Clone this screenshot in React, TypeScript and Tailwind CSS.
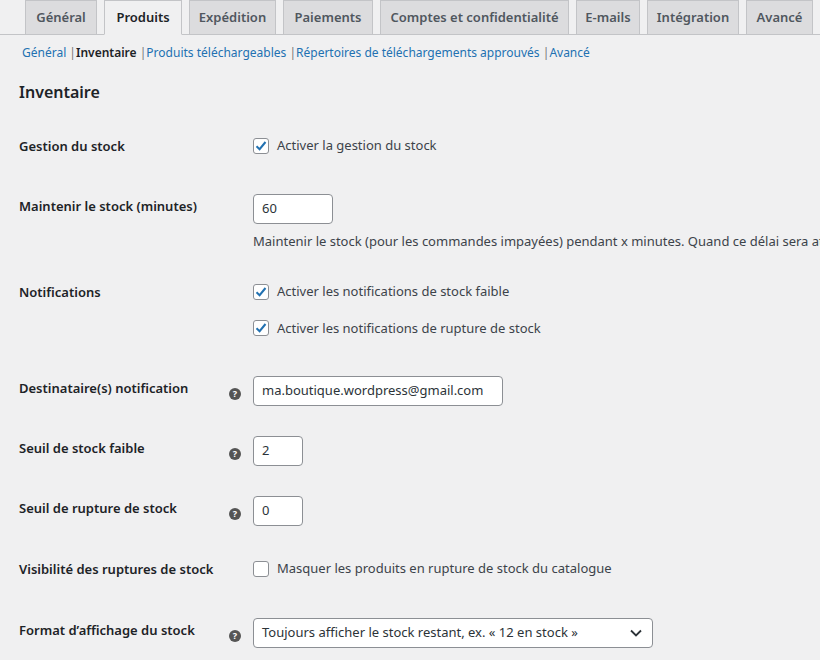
import React from "react";

const Help = () => (
  <span className="inline-flex w-[12px] h-[12px] rounded-full bg-[#555] text-white text-[9px] font-bold items-center justify-center leading-none">?</span>
);

const Check = ({ on }: { on: boolean }) => (
  <span className="inline-flex w-[16px] h-[16px] rounded-[3px] border border-[#8c8f94] bg-white items-center justify-center">
    {on && (
      <svg width="14" height="14" viewBox="0 0 14 14"><path d="M2.5 7.2 L5.6 10.2 L11.5 3" stroke="#2271b1" strokeWidth="2" fill="none" /></svg>
    )}
  </span>
);

const Row = ({ label, help, children, h }: { label: string; help?: boolean; children: React.ReactNode; h: string }) => (
  <div className={`flex items-start ${h}`}>
    <div className="w-[210px] shrink-0 font-semibold text-[#1d2327] pt-[3px]">{label}</div>
    <div className="w-[24px] shrink-0 pt-[7px]">{help && <Help />}</div>
    <div className="flex-1 whitespace-nowrap">{children}</div>
  </div>
);

const Input = ({ v, w }: { v: string; w: string }) => (
  <div className={`${w} h-[30px] border border-[#8c8f94] rounded-[4px] bg-white px-[8px] flex items-center text-[#2c3338]`}>{v}</div>
);

export default function App() {
  const tabs: [string, string][] = [
    ["Général", "w-[72px]"], ["Produits", "w-[78px]"], ["Expédition", "w-[87px]"], ["Paiements", "w-[90px]"],
    ["Comptes et confidentialité", "w-[189px]"], ["E-mails", "w-[64px]"], ["Intégration", "w-[92px]"], ["Avancé", "w-[67px]"],
  ];
  return (
    <div className="w-[820px] h-[660px] overflow-hidden bg-[#f0f0f1] text-[13px] text-[#3c434a]" style={{ fontFamily: '"Noto Sans", "Open Sans", sans-serif' }}>
      <div className="flex gap-[7px] pl-[25px] border-b border-[#c3c4c7] h-[35px] items-end">
        {tabs.map(([t, w]) => (
          <div key={t} className={`${w} h-[35px] flex items-center justify-center text-[13px] font-semibold border border-[#c3c4c7] -mb-px shrink-0 whitespace-nowrap ${t === "Produits" ? "bg-[#f0f0f1] text-[#1d2327] border-b-[#f0f0f1]" : "bg-[#dcdcde] text-[#50575e]"}`}>{t}</div>
        ))}
      </div>
      <div className="pl-[22px] pt-[9px] text-[12px] text-[#2271b1] whitespace-nowrap">
        Général <span className="text-[#777]">|</span><span className="font-semibold text-[#1d2327]">Inventaire</span> <span className="text-[#777]">|</span>Produits téléchargeables <span className="text-[#777]">|</span>Répertoires de téléchargements approuvés <span className="text-[#777]">|</span>Avancé
      </div>
      <div className="pl-[19px] pt-[18px] text-[16px] font-semibold text-[#1d2327]">Inventaire</div>
      <div className="pl-[19px] pt-[30px]">
        <Row label="Gestion du stock" h="h-[60px]">
          <label className="flex items-center gap-[8px] pt-[2px]"><Check on />Activer la gestion du stock</label>
        </Row>
        <Row label="Maintenir le stock (minutes)" h="h-[86px]">
          <Input v="60" w="w-[80px]" />
          <div className="pt-[8px]">Maintenir le stock (pour les commandes impayées) pendant x minutes. Quand ce délai sera atteint</div>
        </Row>
        <Row label="Notifications" h="h-[96px]">
          <label className="flex items-center gap-[8px] pt-[2px]"><Check on />Activer les notifications de stock faible</label>
          <label className="flex items-center gap-[8px] pt-[17px]"><Check on />Activer les notifications de rupture de stock</label>
        </Row>
        <Row label="Destinataire(s) notification" help h="h-[60px]">
          <Input v="ma.boutique.wordpress@gmail.com" w="w-[250px]" />
        </Row>
        <Row label="Seuil de stock faible" help h="h-[60px]">
          <Input v="2" w="w-[50px]" />
        </Row>
        <Row label="Seuil de rupture de stock" help h="h-[61px]">
          <Input v="0" w="w-[50px]" />
        </Row>
        <Row label="Visibilité des ruptures de stock" h="h-[61px]">
          <label className="flex items-center gap-[8px] pt-[2px]"><Check on={false} />Masquer les produits en rupture de stock du catalogue</label>
        </Row>
        <Row label="Format d’affichage du stock" help h="h-[60px]">
          <div className="w-[400px] h-[30px] border border-[#8c8f94] rounded-[4px] bg-white pl-[8px] pr-[10px] flex items-center justify-between text-[#2c3338]">
            <span>Toujours afficher le stock restant, ex. « 12 en stock »</span>
            <svg width="12" height="8" viewBox="0 0 12 8"><path d="M1 1.5 L6 6.5 L11 1.5" stroke="#2c3338" strokeWidth="1.8" fill="none" /></svg>
          </div>
        </Row>
      </div>
    </div>
  );
}
